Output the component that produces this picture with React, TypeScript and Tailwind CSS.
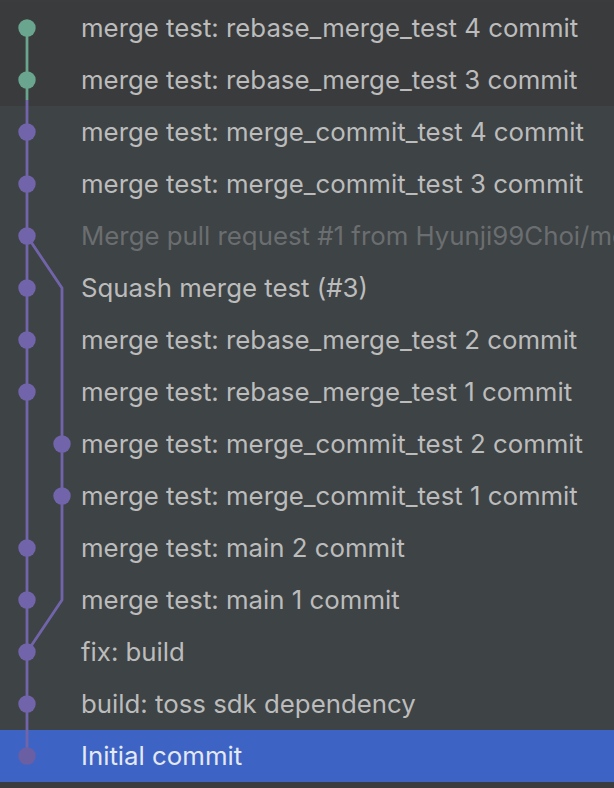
import React from 'react';

type Commit = { msg: string; faded?: boolean };

const commits: Commit[] = [
  { msg: 'merge test: rebase_merge_test 4 commit' },
  { msg: 'merge test: rebase_merge_test 3 commit' },
  { msg: 'merge test: merge_commit_test 4 commit' },
  { msg: 'merge test: merge_commit_test 3 commit' },
  { msg: 'Merge pull request #1 from Hyunji99Choi/merge_commit_test', faded: true },
  { msg: 'Squash merge test (#3)' },
  { msg: 'merge test: rebase_merge_test 2 commit' },
  { msg: 'merge test: rebase_merge_test 1 commit' },
  { msg: 'merge test: merge_commit_test 2 commit' },
  { msg: 'merge test: merge_commit_test 1 commit' },
  { msg: 'merge test: main 2 commit' },
  { msg: 'merge test: main 1 commit' },
  { msg: 'fix: build' },
  { msg: 'build: toss sdk dependency' },
  { msg: 'Initial commit' },
];

const ROW = 52;
const L0 = 27;
const L1 = 62;
const cy = (i: number) => ROW * i + ROW / 2;

const GREEN = '#6aa58f';
const PURPLE = '#7264ab';

// lane of each commit dot
const lanes = [0, 0, 0, 0, 0, 0, 0, 0, 1, 1, 0, 0, 0, 0, 0];

const Graph: React.FC = () => (
  <svg
    className="absolute left-0 top-0 pointer-events-none"
    width={100}
    height={ROW * commits.length}
  >
    {/* main lane */}
    <line x1={L0} y1={cy(0)} x2={L0} y2={cy(1) + 20} stroke={GREEN} strokeWidth={2.8} />
    <line x1={L0} y1={cy(1) + 20} x2={L0} y2={cy(14)} stroke={PURPLE} strokeWidth={2.8} />
    {/* side branch */}
    <polyline
      points={`${L0},${cy(4)} ${L1},${cy(5)} ${L1},${cy(11)} ${L0},${cy(12)}`}
      fill="none"
      stroke={PURPLE}
      strokeWidth={2.8}
      strokeLinejoin="round"
    />
    {commits.map((_, i) => (
      <circle
        key={i}
        cx={lanes[i] === 0 ? L0 : L1}
        cy={cy(i)}
        r={8.7}
        fill={i < 2 ? GREEN : i === 14 ? '#6b5fa3' : PURPLE}
      />
    ))}
  </svg>
);

const App: React.FC = () => {
  return (
    <div
      className="w-[614px] h-[788px] overflow-hidden bg-[#3a3c3e] pt-[2px]"
      style={{ fontFamily: 'Inter, "Noto Sans", sans-serif' }}
    >
      <div className="relative">
        {commits.map((c, i) => (
          <div
            key={i}
            className={`h-[52px] flex items-center pl-[81px] whitespace-nowrap overflow-hidden text-[25.8px] ${
              i < 2 ? 'bg-[#3a3b3c]' : i === 14 ? 'bg-[#3d64c4]' : 'bg-[#3e4345]'
            } ${c.faded ? 'text-[#6b6e70]' : i === 14 ? 'text-[#e4e8f2]' : 'text-[#bcbcbc]'}`}
          >
            {c.msg}
          </div>
        ))}
        <Graph />
      </div>
    </div>
  );
};

export default App;
